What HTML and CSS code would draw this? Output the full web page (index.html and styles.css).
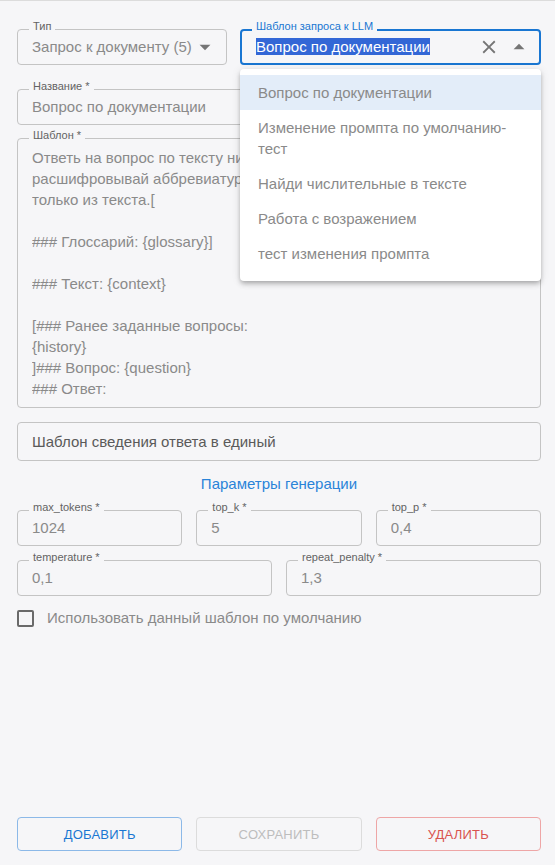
FILE: index.html
```html
<!DOCTYPE html>
<html lang="ru">
<head>
<meta charset="utf-8">
<title>Шаблон запроса</title>
<link rel="stylesheet" href="styles.css">
</head>
<body>
<div class="page">
  <div class="row-top">
    <div class="field">
      <span class="label">Тип</span>
      <span class="value">Запрос к документу (5)</span>
      <svg class="icon arrow" viewBox="0 0 24 24"><path d="M7 10l5 5 5-5z"/></svg>
    </div>
    <div class="field focused">
      <span class="label">Шаблон запроса к LLM</span>
      <span class="value"><span class="sel">Вопрос по документации</span></span>
      <svg class="icon close" viewBox="0 0 24 24"><path d="M19 6.41 17.59 5 12 10.59 6.41 5 5 6.41 10.59 12 5 17.59 6.41 19 12 13.41 17.59 19 19 17.59 13.41 12z"/></svg>
      <svg class="icon arrow" viewBox="0 0 24 24"><path d="M7 14l5-5 5 5z"/></svg>
      <ul class="menu">
        <li class="active">Вопрос по документации</li>
        <li>Изменение промпта по умолчанию-тест</li>
        <li>Найди числительные в тексте</li>
        <li>Работа с возражением</li>
        <li>тест изменения промпта</li>
      </ul>
    </div>
  </div>

  <div class="field name">
    <span class="label">Название *</span>
    <span class="value">Вопрос по документации</span>
  </div>

  <div class="field area">
    <span class="label">Шаблон *</span>
    <div class="text">Ответь на вопрос по тексту ниже. Не придумывай и не
расшифровывай аббревиатуры. Используй информацию
только из текста.[

### Глоссарий: {glossary}]

### Текст: {context}

[### Ранее заданные вопросы:
{history}
]### Вопрос: {question}
### Ответ:</div>
  </div>

  <div class="field plain">
    <span class="value dark">Шаблон сведения ответа в единый</span>
  </div>

  <div class="section-title">Параметры генерации</div>

  <div class="grid3">
    <div class="field">
      <span class="label">max_tokens *</span>
      <span class="value">1024</span>
    </div>
    <div class="field">
      <span class="label">top_k *</span>
      <span class="value">5</span>
    </div>
    <div class="field">
      <span class="label">top_p *</span>
      <span class="value">0,4</span>
    </div>
  </div>

  <div class="grid2">
    <div class="field">
      <span class="label">temperature *</span>
      <span class="value">0,1</span>
    </div>
    <div class="field">
      <span class="label">repeat_penalty *</span>
      <span class="value">1,3</span>
    </div>
  </div>

  <label class="check">
    <span class="box"></span>
    <span class="check-text">Использовать данный шаблон по умолчанию</span>
  </label>

  <div class="buttons">
    <button class="btn add">Добавить</button>
    <button class="btn save" disabled>Сохранить</button>
    <button class="btn del">Удалить</button>
  </div>
</div>
</body>
</html>
```

FILE: styles.css
```css
* { box-sizing: border-box; }

html, body {
  margin: 0;
  padding: 0;
  background: #f6f6f8;
}

body {
  font-family: "Liberation Sans", Arial, sans-serif;
  color: #8a8a8a;
}

.page {
  height: 865px;
  border-top: 1px solid #dcdcdc;
  padding: 28px 14px 14px 17px;
  display: flex;
  flex-direction: column;
  overflow: hidden;
}

.row-top {
  display: grid;
  grid-template-columns: 210px 1fr;
  gap: 13px;
}

.field {
  position: relative;
  display: flex;
  align-items: center;
  height: 36px;
  border: 1px solid #c4c4c4;
  border-radius: 4px;
  padding: 0 8px 0 14px;
}

.label {
  position: absolute;
  top: -10px;
  left: 11px;
  padding: 0 4px;
  font-size: 11px;
  line-height: 13px;
  color: #636363;
  background: #f6f6f8;
  white-space: nowrap;
}

.value {
  flex: 1;
  font-size: 15px;
  line-height: 20px;
  color: #8a8a8a;
  white-space: nowrap;
  overflow: hidden;
}

.value.dark { color: #5a5a5a; }

.icon {
  flex: none;
  fill: #757575;
}

.icon.arrow { width: 26px; height: 26px; }
.icon.close { width: 22px; height: 22px; margin-right: 6px; }

.field.focused {
  border: 2px solid #1976d2;
  padding: 0 7px 0 14px;
}

.field.focused .label {
  top: -11px;
  left: 10px;
  color: #1976d2;
}

.sel {
  background: #3367d6;
  color: #ffffff;
}

.menu {
  position: absolute;
  top: calc(100% + 6px);
  left: -2px;
  right: -2px;
  margin: 0;
  padding: 6px 0 10px;
  list-style: none;
  background: #ffffff;
  border-radius: 4px;
  box-shadow: 0 2px 4px -1px rgba(0,0,0,0.2), 0 4px 5px 0 rgba(0,0,0,0.12), 0 1px 10px 0 rgba(0,0,0,0.1);
  z-index: 10;
}

.menu li {
  padding: 7px 18px;
  font-size: 15px;
  line-height: 21px;
  color: #8a8a8a;
}

.menu li.active { background: #e3edf9; }

.field.name { margin-top: 24px; }

.field.area {
  margin-top: 13px;
  height: auto;
  display: block;
  padding: 8px 14px;
}

.area .text {
  font-size: 15px;
  line-height: 21px;
  white-space: pre;
  overflow: hidden;
  color: #8a8a8a;
}

.field.plain {
  margin-top: 14px;
  height: 39px;
}

.section-title {
  margin-top: 13px;
  text-align: center;
  font-size: 15px;
  line-height: 20px;
  color: #2a84d8;
}

.grid3 {
  margin-top: 16px;
  display: grid;
  grid-template-columns: repeat(3, 1fr);
  gap: 14px;
}

.grid2 {
  margin-top: 14px;
  display: grid;
  grid-template-columns: repeat(2, 1fr);
  gap: 14px;
}

.check {
  margin-top: 12px;
  display: flex;
  align-items: center;
  gap: 13px;
}

.box {
  width: 17px;
  height: 17px;
  border: 2px solid #6a6a6a;
  border-radius: 2px;
}

.check-text {
  font-size: 15px;
  line-height: 20px;
  color: #8a8a8a;
}

.buttons {
  margin-top: auto;
  display: grid;
  grid-template-columns: repeat(3, 1fr);
  gap: 14px;
}

.btn {
  height: 34px;
  background: transparent;
  border: 1px solid;
  border-radius: 4px;
  font-family: "Liberation Sans", Arial, sans-serif;
  font-size: 13px;
  text-transform: uppercase;
  letter-spacing: 0.2px;
}

.btn.add { color: #1976d2; border-color: #8cb9e8; }
.btn.save { color: #bdbdbd; border-color: #dcdcdc; }
.btn.del { color: #d9534f; border-color: #eea6a6; }
```
